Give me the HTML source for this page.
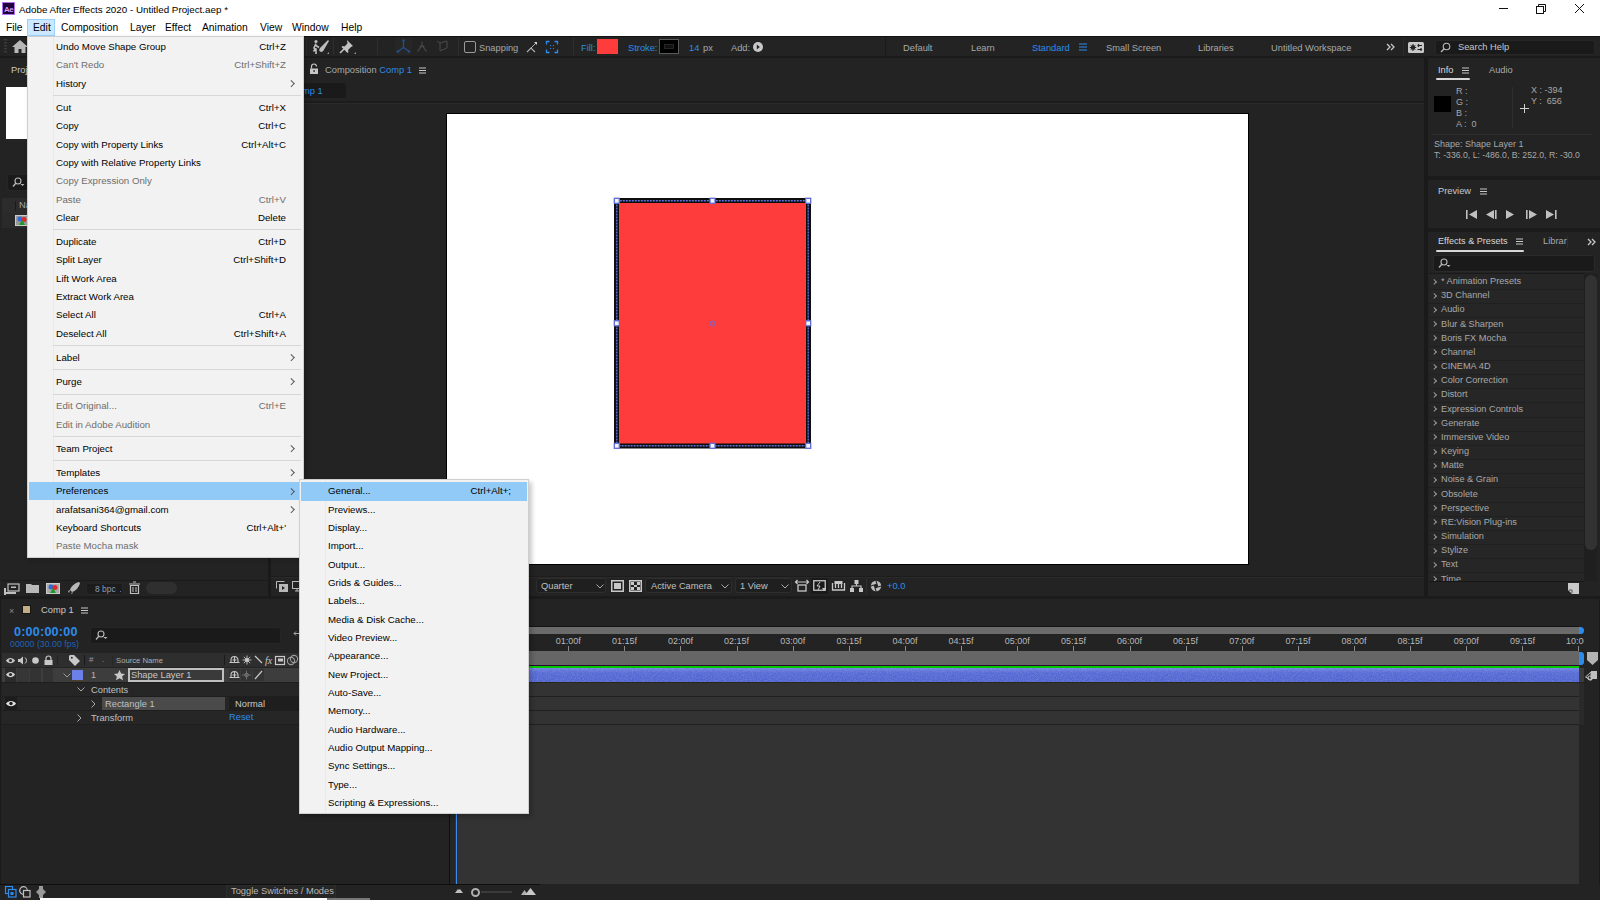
<!DOCTYPE html>
<html><head><meta charset="utf-8">
<style>
*{box-sizing:border-box;margin:0;padding:0}
html,body{width:1600px;height:900px;overflow:hidden;background:#1b1b1b;font-family:"Liberation Sans",sans-serif;position:relative}
.a{position:absolute}
.t{position:absolute;white-space:nowrap;line-height:1}
.g{color:#a8a8a8}
.b{color:#2d8ceb}
.ui{font-size:9.3px}
.panel{position:absolute;background:#232323}
.sep{position:absolute;width:1px;background:#2e2e2e}
svg{position:absolute;overflow:visible}
.mi{position:absolute;left:28px;font-size:9.7px;color:#000;white-space:nowrap;line-height:1}
.mk{position:absolute;right:17px;font-size:9.7px;color:#000;white-space:nowrap;line-height:1}
.dis{color:#6d6d6d}
.ms{position:absolute;left:25px;right:2px;height:1px;background:#d7d7d7}
.arr{position:absolute;right:10px;width:4.5px;height:4.5px;border-right:1.1px solid #555;border-top:1.1px solid #555;transform:rotate(45deg)}
.ef{position:absolute;left:12px;font-size:9.2px;color:#a8a8a8;white-space:nowrap;line-height:1}
.efa{position:absolute;left:3px;width:4.3px;height:4.3px;border-right:1px solid #9a9a9a;border-top:1px solid #9a9a9a;transform:rotate(45deg)}
.efl{position:absolute;left:0px;width:155px;height:1px;background:#202020}
</style></head><body>
<!-- ===== TITLE BAR ===== -->
<div class="a" style="left:0;top:0;width:1600px;height:36px;background:#fff"></div>
<div class="a" style="left:2px;top:2px;width:13px;height:13px;background:#1f0038;border:1px solid #b070f0"></div>
<div class="t" style="left:4px;top:5.5px;font-size:8px;font-weight:bold;color:#cf9cff;letter-spacing:-0.6px">Ae</div>
<div class="t" style="left:19px;top:4.5px;font-size:9.8px;color:#000">Adobe After Effects 2020 - Untitled Project.aep *</div>
<div class="a" style="left:1499px;top:8px;width:9px;height:1px;background:#111"></div>
<svg style="left:1536px;top:4px" width="10" height="10"><rect x="0.5" y="2.5" width="7" height="7" fill="none" stroke="#111"/><path d="M2.5 2.5V0.5h7v7h-2" fill="none" stroke="#111"/></svg>
<svg style="left:1575px;top:4px" width="9" height="9"><path d="M0 0L9 9M9 0L0 9" stroke="#111" stroke-width="1"/></svg>
<!-- menubar -->
<div class="a" style="left:27px;top:19px;width:28px;height:17px;background:#cce8ff;border:1px solid #99d1ff"></div>
<div class="t" style="left:6px;top:23px;font-size:10.3px;color:#000">File</div>
<div class="t" style="left:33px;top:23px;font-size:10.3px;color:#000">Edit</div>
<div class="t" style="left:61px;top:23px;font-size:10.3px;color:#000">Composition</div>
<div class="t" style="left:130px;top:23px;font-size:10.3px;color:#000">Layer</div>
<div class="t" style="left:165px;top:23px;font-size:10.3px;color:#000">Effect</div>
<div class="t" style="left:202px;top:23px;font-size:10.3px;color:#000">Animation</div>
<div class="t" style="left:260px;top:23px;font-size:10.3px;color:#000">View</div>
<div class="t" style="left:292px;top:23px;font-size:10.3px;color:#000">Window</div>
<div class="t" style="left:341px;top:23px;font-size:10.3px;color:#000">Help</div>

<!-- ===== TOOLBAR ===== -->
<div class="a" style="left:0;top:36px;width:1600px;height:21px;background:#232323;border-top:1px solid #121212"></div>
<div class="a" style="left:0;top:56px;width:1600px;height:2px;background:#1a1a1a"></div>
<div class="sep" style="left:306px;top:38px;height:17px;background:#2c2c2c"></div>
<!-- puppet -->
<svg style="left:312px;top:39px" width="18" height="16"><circle cx="4" cy="2.5" r="1.6" fill="#bdbdbd"/><path d="M4 4.5L2 9l2 1v5M4 6.5l3 2M3.5 9.5l-2 3" stroke="#bdbdbd" stroke-width="1.6" fill="none"/><path d="M16 1L8 9c-1 1-1 3 0 3.5 1.5 1 3 0 3.5-1L17 2z" fill="#bdbdbd"/><path d="M15 15h2v-2z" fill="#9a9a9a"/></svg>
<div class="sep" style="left:333px;top:38px;height:17px"></div>
<svg style="left:339px;top:39px" width="18" height="16"><path d="M8 1l6 6-2 1-3 3 .5 2-1 1-6-6 1-1 2 .5 3-3z" fill="#c4c4c4"/><path d="M5 10l-4 4" stroke="#c4c4c4" stroke-width="1.6"/><path d="M15 15h2v-2z" fill="#9a9a9a"/></svg>
<div class="sep" style="left:377px;top:38px;height:17px"></div>
<div class="a" style="left:395px;top:38px;width:17px;height:17px;background:#262626;border-radius:2px"></div>
<svg style="left:396px;top:39px" width="15" height="15"><path d="M7.5 1.5v7M7.5 8.5l-5.5 4M7.5 8.5l5.5 4" stroke="#23508a" stroke-width="1.2" fill="none"/><circle cx="7.5" cy="1.5" r="1.3" fill="#23508a"/><circle cx="2" cy="12.5" r="1.3" fill="#23508a"/><circle cx="13" cy="12.5" r="1.3" fill="#23508a"/></svg>
<svg style="left:415px;top:40px" width="14" height="13"><path d="M7 1.5v4l-4.5 6M7 5.5l4.5 6M4.5 7l2.5-1.5 2.5 1.5" stroke="#4a4a4a" stroke-width="1.1" fill="none"/></svg>
<svg style="left:436px;top:40px" width="12" height="12"><path d="M1 1l3 2v8l7-3V1L4 3" stroke="#4a4a4a" stroke-width="1" fill="none"/></svg>
<div class="sep" style="left:458px;top:38px;height:17px"></div>
<div class="a" style="left:464px;top:41px;width:12px;height:12px;border:1.5px solid #9a9a9a;border-radius:2px"></div>
<div class="t ui g" style="left:479px;top:43.7px">Snapping</div>
<svg style="left:526px;top:41px" width="12" height="12"><path d="M1 11l4-4 4 4" stroke="#b0b0b0" stroke-width="1.1" fill="none"/><path d="M5 7l6-6" stroke="#b0b0b0" stroke-width="1"/><path d="M8 1h3v3z" fill="#d0d0d0"/></svg>
<svg style="left:546px;top:41px" width="12" height="12"><path d="M0.5 3.5v-3h3M8.5 0.5h3v3M11.5 8.5v3h-3M3.5 11.5h-3v-3" stroke="#2d8ceb" stroke-width="1.3" fill="none"/><path d="M4 4l1 1M8 4l-1 1M4 8l1-1M8 8l-1-1" stroke="#2d8ceb" stroke-width="1"/></svg>
<div class="sep" style="left:573px;top:38px;height:17px"></div>
<div class="t ui b" style="left:581px;top:43.7px">Fill:</div>
<div class="a" style="left:597px;top:39px;width:21px;height:15px;background:#ff3c3c"></div>
<div class="t ui b" style="left:628px;top:43.7px">Stroke:</div>
<div class="a" style="left:659px;top:39px;width:20px;height:15px;background:#000;border:1px solid #5a5a5a"></div>
<div class="a" style="left:664px;top:44px;width:10px;height:5px;background:#111;border:1px solid #262626"></div>
<div class="t ui b" style="left:689px;top:43.7px">14</div>
<div class="t ui g" style="left:703px;top:43.7px">px</div>
<div class="t ui g" style="left:731px;top:43.7px">Add:</div>
<svg style="left:753px;top:42px" width="10" height="10"><circle cx="5" cy="5" r="5" fill="#c8c8c8"/><path d="M3.8 2.5l3 2.5-3 2.5z" fill="#232323"/></svg>
<div class="sep" style="left:885px;top:37px;height:19px;background:#1a1a1a"></div>
<div class="t ui g" style="left:903px;top:43.7px">Default</div>
<div class="t ui g" style="left:971px;top:43.7px">Learn</div>
<div class="t ui b" style="left:1032px;top:43.7px">Standard</div>
<svg style="left:1079px;top:43px" width="8" height="8"><path d="M0 1h8M0 4h8M0 7h8" stroke="#2d8ceb" stroke-width="1.2"/></svg>
<div class="t ui g" style="left:1106px;top:43.7px">Small Screen</div>
<div class="t ui g" style="left:1198px;top:43.7px">Libraries</div>
<div class="t ui g" style="left:1271px;top:43.7px">Untitled Workspace</div>
<svg style="left:1386px;top:43px" width="10" height="8"><path d="M1 1l3 3-3 3M5 1l3 3-3 3" stroke="#c8c8c8" stroke-width="1.3" fill="none"/></svg>
<div class="sep" style="left:1403px;top:37px;height:19px;background:#2c2c2c"></div>
<div class="a" style="left:1408px;top:42px;width:16px;height:11px;background:#c8c8c8;border-radius:1.5px"></div>
<svg style="left:1409px;top:43px" width="14" height="9"><circle cx="4" cy="4.5" r="2.2" fill="#232323"/><path d="M4 1v7M0.8 4.5h6.4M1.8 2.3l4.4 4.4M6.2 2.3L1.8 6.7" stroke="#232323" stroke-width="1"/><path d="M8.5 2.5h4.5M8.5 6.5h4.5" stroke="#232323" stroke-width="1"/><path d="M9.5 1v3M12 5v3" stroke="#232323" stroke-width="1.2"/></svg>
<div class="a" style="left:1435px;top:40px;width:160px;height:15px;background:#1a1a1a;border-radius:3px;border:1px solid #262626"></div>
<svg style="left:1440px;top:42px" width="11" height="11"><circle cx="6.5" cy="4.5" r="3.3" stroke="#b8b8b8" stroke-width="1.1" fill="none"/><path d="M4.2 6.8L1 10" stroke="#b8b8b8" stroke-width="1.4"/></svg>
<div class="t" style="left:1458px;top:43px;font-size:9.3px;color:#c8c8c8">Search Help</div>
<!-- ===== PROJECT PANEL ===== -->
<div class="panel" style="left:0;top:58px;width:268px;height:538px"></div>
<svg style="left:4px;top:39px" width="3" height="16"><g fill="#3a3a3a"><rect y="0" width="3" height="1.5"/><rect y="3" width="3" height="1.5"/><rect y="6" width="3" height="1.5"/><rect y="9" width="3" height="1.5"/><rect y="12" width="3" height="1.5"/></g></svg>
<svg style="left:12px;top:40px" width="16" height="13"><path d="M8 0L0 7h2.5v6h4V9h3v4h4V7H16z" fill="#b8b8b8"/></svg>
<div class="t" style="left:11px;top:66px;font-size:9.3px;color:#c8c8c8">Project</div>
<div class="a" style="left:6px;top:87px;width:60px;height:52px;background:#fff"></div>
<div class="a" style="left:7px;top:174px;width:200px;height:17px;background:#1a1a1a;border-radius:3px;border:1px solid #262626"></div>
<svg style="left:12px;top:177px" width="14" height="11"><circle cx="6" cy="4" r="3" stroke="#b8b8b8" stroke-width="1.1" fill="none"/><path d="M4 6L1 9.5" stroke="#b8b8b8" stroke-width="1.3"/><path d="M8.5 7h4l-2 2z" fill="#b8b8b8"/></svg>
<div class="a" style="left:2px;top:198px;width:266px;height:15px;background:#2c2c2c"></div>
<div class="a" style="left:15px;top:201px;width:1px;height:10px;background:#1a1a1a"></div>
<div class="t ui g" style="left:19px;top:201px">Name</div>
<div class="a" style="left:2px;top:213px;width:266px;height:15px;background:#2a2a2a"></div>
<div class="a" style="left:15px;top:215px;width:14px;height:11px;background:#999;border:1px solid #ccc"></div>
<svg style="left:17px;top:216px" width="10" height="9"><circle cx="3" cy="3" r="2.5" fill="#2a6be0"/><circle cx="7" cy="3.5" r="2.5" fill="#e02a2a"/><path d="M2 9l3-5 3 5z" fill="#1a9a2a"/></svg>
<!-- project bottom toolbar -->
<div class="a" style="left:2px;top:580px;width:266px;height:1px;background:#1a1a1a"></div>
<svg style="left:4px;top:583px" width="16" height="12"><rect x="4" y="1" width="11" height="7" fill="none" stroke="#c0c0c0" stroke-width="1.2"/><rect x="7" y="3.5" width="5" height="1.5" fill="#c0c0c0"/><rect x="0" y="5" width="2" height="7" fill="#c0c0c0"/><rect x="2" y="9" width="10" height="2" fill="#c0c0c0"/></svg>
<svg style="left:26px;top:583px" width="13" height="10"><path d="M0 1h5l1 1h7v8H0z" fill="#b8b8b8"/></svg>
<div class="a" style="left:46px;top:583px;width:14px;height:11px;background:#aaa;border:1px solid #ccc"></div>
<svg style="left:48px;top:584px" width="10" height="9"><circle cx="3" cy="3" r="2.5" fill="#2a6be0"/><circle cx="7" cy="3.5" r="2.5" fill="#e02a2a"/><path d="M2 9l3-5 3 5z" fill="#1a9a2a"/></svg>
<svg style="left:68px;top:582px" width="12" height="12"><path d="M11 0C7 1 3 4 2 8l2 2c4-1 7-5 8-9z" fill="#b8b8b8"/><path d="M2 8L0 9l1 2zM3 11l1 1 1-2z" fill="#b8b8b8"/></svg>
<div class="a" style="left:86px;top:583px;width:37px;height:12px;background:#1c1c1c;border-radius:2px;border:1px solid #262626"></div>
<div class="t" style="left:95px;top:585px;font-size:8.5px;color:#8b9bb5">8 bpc</div>
<div class="a" style="left:120px;top:591px;width:1px;height:1px;background:#4a7ac0"></div>
<svg style="left:129px;top:582px" width="11" height="12"><path d="M0 2h11M4 0h3" stroke="#c0c0c0" stroke-width="1.2"/><path d="M1.5 3.5h8v8h-8z" fill="none" stroke="#c0c0c0" stroke-width="1.2"/><path d="M4 5v5M7 5v5" stroke="#c0c0c0" stroke-width="1"/></svg>
<div class="a" style="left:146px;top:582px;width:31px;height:12px;background:#2f2f2f;border-radius:6px"></div>
<div class="a" style="left:268px;top:58px;width:3px;height:538px;background:#1a1a1a"></div>

<!-- ===== COMPOSITION PANEL ===== -->
<div class="panel" style="left:271px;top:58px;width:1153px;height:538px"></div>
<svg style="left:310px;top:64px" width="8" height="10"><path d="M1.5 4.5V2.5a2.5 2.5 0 0 1 5 0" fill="none" stroke="#c8c8c8" stroke-width="1.2"/><rect x="0" y="4.5" width="8" height="5.5" fill="#c8c8c8"/><rect x="3.5" y="6" width="1.2" height="2" fill="#232323"/></svg>
<div class="t ui g" style="left:325px;top:66px">Composition <span class="b">Comp 1</span></div>
<svg style="left:419px;top:67px" width="8" height="7"><path d="M0 1h7M0 3.5h7M0 6h7" stroke="#c8c8c8" stroke-width="1.1"/></svg>
<div class="a" style="left:280px;top:83px;width:66px;height:15px;background:#1a1a1a;border-radius:2px"></div>
<div class="t ui b" style="left:290px;top:87px">Comp 1</div>
<div class="a" style="left:271px;top:101px;width:1153px;height:2px;background:#1c1c1c"></div>
<div class="a" style="left:271px;top:103px;width:1153px;height:1px;background:#2a2a2a"></div>
<!-- canvas -->
<div class="a" style="left:446px;top:113px;width:803px;height:452px;background:#fff;border:1px solid #000"></div>
<svg style="left:0;top:0" width="1600" height="900">
<rect x="614" y="198" width="197" height="250.5" fill="#0d0d0d"/>
<rect x="619" y="203" width="187" height="240.5" fill="#ff3c3c"/>
<rect x="616.8" y="200.8" width="191.4" height="245" fill="none" stroke="#6272dc" stroke-width="1.4" stroke-dasharray="2 1"/>
<rect x="614.3" y="198.3" width="5" height="5" fill="#f4f4f4" stroke="#5f6ed8" stroke-width="1.3"/><rect x="710.0" y="198.3" width="5" height="5" fill="#f4f4f4" stroke="#5f6ed8" stroke-width="1.3"/><rect x="805.7" y="198.3" width="5" height="5" fill="#f4f4f4" stroke="#5f6ed8" stroke-width="1.3"/><rect x="614.3" y="320.8" width="5" height="5" fill="#f4f4f4" stroke="#5f6ed8" stroke-width="1.3"/><rect x="805.7" y="320.8" width="5" height="5" fill="#f4f4f4" stroke="#5f6ed8" stroke-width="1.3"/><rect x="614.3" y="443.3" width="5" height="5" fill="#f4f4f4" stroke="#5f6ed8" stroke-width="1.3"/><rect x="710.0" y="443.3" width="5" height="5" fill="#f4f4f4" stroke="#5f6ed8" stroke-width="1.3"/><rect x="805.7" y="443.3" width="5" height="5" fill="#f4f4f4" stroke="#5f6ed8" stroke-width="1.3"/>
<circle cx="712.5" cy="323.5" r="2.5" fill="none" stroke="#6a6ad8" stroke-width="1"/>
</svg>
<!-- comp bottom bar -->
<div class="a" style="left:271px;top:576px;width:1153px;height:1px;background:#1c1c1c"></div><div class="a" style="left:271px;top:577px;width:1153px;height:1px;background:#2a2a2a"></div>
<svg style="left:276px;top:581px" width="12" height="11"><rect x="3" y="3" width="9" height="8" fill="#b8b8b8"/><path d="M0.5 7.5v-7h8" fill="none" stroke="#b8b8b8"/><path d="M6 5l3 2-3 2z" fill="#232323"/></svg>
<svg style="left:292px;top:581px" width="10" height="11"><rect x="0.5" y="0.5" width="9" height="7" fill="none" stroke="#b8b8b8"/><path d="M3 10h4M5 8v2" stroke="#b8b8b8"/></svg>
<div class="a" style="left:536px;top:578px;width:70px;height:15px;background:#1f1f1f;border-radius:2.5px;border:1px solid #2e2e2e"></div>
<div class="t ui g" style="left:541px;top:582px;color:#c0c0c0">Quarter</div>
<svg style="left:596px;top:584px" width="8" height="5"><path d="M0.5 0.5l3.5 3.5 3.5-3.5" stroke="#aaa" fill="none"/></svg>
<svg style="left:611px;top:580px" width="13" height="12"><rect x="0.75" y="0.75" width="11.5" height="10.5" fill="none" stroke="#c8c8c8" stroke-width="1.5"/><rect x="3" y="3" width="7" height="6" fill="#c8c8c8"/></svg>
<svg style="left:629px;top:580px" width="13" height="12"><rect x="0.75" y="0.75" width="11.5" height="10.5" fill="none" stroke="#c8c8c8" stroke-width="1.5"/><g fill="#c8c8c8"><rect x="2" y="2" width="3" height="3"/><rect x="8" y="2" width="3" height="3"/><rect x="5" y="5" width="3" height="2"/><rect x="2" y="7" width="3" height="3"/><rect x="8" y="7" width="3" height="3"/></g></svg>
<div class="a" style="left:645px;top:578px;width:87px;height:15px;background:#1f1f1f;border-radius:2.5px;border:1px solid #2e2e2e"></div>
<div class="t ui" style="left:651px;top:582px;color:#c0c0c0">Active Camera</div>
<svg style="left:721px;top:584px" width="8" height="5"><path d="M0.5 0.5l3.5 3.5 3.5-3.5" stroke="#aaa" fill="none"/></svg>
<div class="a" style="left:735px;top:578px;width:57px;height:15px;background:#1f1f1f;border-radius:2.5px;border:1px solid #2e2e2e"></div>
<div class="t ui" style="left:740px;top:582px;color:#c0c0c0">1 View</div>
<svg style="left:781px;top:584px" width="8" height="5"><path d="M0.5 0.5l3.5 3.5 3.5-3.5" stroke="#aaa" fill="none"/></svg>
<svg style="left:795px;top:580px" width="14" height="12"><path d="M0 2h14M2.5 0l-2 2 2 2M11.5 0l2 2-2 2" stroke="#c8c8c8" stroke-width="1.2" fill="none"/><rect x="3" y="5" width="8" height="6" fill="none" stroke="#c8c8c8" stroke-width="1.3"/></svg>
<div class="a" style="left:811px;top:578px;width:17px;height:16px;background:#1a1a1a"></div>
<svg style="left:813px;top:580px" width="13" height="12"><rect x="0.75" y="0.75" width="11.5" height="9.5" fill="none" stroke="#c8c8c8" stroke-width="1.3"/><path d="M7 2l-3 4h3l-2 4" stroke="#c8c8c8" fill="none"/><path d="M9 8h4l-2 3z" fill="#c8c8c8"/></svg>
<svg style="left:832px;top:580px" width="13" height="11"><path d="M0.5 3v7h12V3M3.5 3v5M6.5 1v7M9.5 3v5" stroke="#c8c8c8" stroke-width="1.3" fill="none"/><rect x="2.5" y="1" width="8" height="3" fill="#c8c8c8"/></svg>
<svg style="left:850px;top:580px" width="13" height="12"><rect x="4.5" y="0" width="4" height="4" fill="#c8c8c8"/><rect x="0" y="8" width="4" height="4" fill="#c8c8c8"/><rect x="9" y="8" width="4" height="4" fill="#c8c8c8"/><path d="M6.5 4v2M2 8V6h9v2" stroke="#c8c8c8" fill="none" stroke-width="1.2"/></svg>
<div class="a" style="left:866px;top:579px;width:1px;height:15px;background:#2e2e2e"></div>
<svg style="left:870px;top:580px" width="12" height="12"><circle cx="6" cy="6" r="5.2" fill="#bdbdbd"/><circle cx="6" cy="6" r="2.2" fill="#232323"/><path d="M6 0.8L7 4M11.2 6L8 7M6 11.2L5 8M0.8 6L4 5" stroke="#232323" stroke-width="1.1"/></svg>
<div class="t ui b" style="left:887px;top:582px">+0.0</div>
<div class="a" style="left:1424px;top:58px;width:4px;height:538px;background:#1a1a1a"></div>
<!-- ===== RIGHT COLUMN ===== -->
<!-- info -->
<div class="panel" style="left:1428px;top:58px;width:172px;height:118px"></div>
<div class="t" style="left:1438px;top:66px;font-size:9.3px;color:#d8d8d8">Info</div>
<svg style="left:1462px;top:67px" width="8" height="7"><path d="M0 1h7M0 3.5h7M0 6h7" stroke="#c8c8c8" stroke-width="1"/></svg>
<div class="a" style="left:1436px;top:78px;width:34px;height:2px;background:#d8d8d8;border-radius:1px"></div>
<div class="t ui g" style="left:1489px;top:66px">Audio</div>
<div class="a" style="left:1434px;top:96px;width:17px;height:16px;background:#000"></div>
<div class="t g" style="left:1456px;top:87px;font-size:9px">R :</div>
<div class="t g" style="left:1456px;top:98px;font-size:9px">G :</div>
<div class="t g" style="left:1456px;top:109px;font-size:9px">B :</div>
<div class="t g" style="left:1456px;top:120px;font-size:9px">A :&nbsp; 0</div>
<div class="a" style="left:1512px;top:87px;width:1px;height:41px;background:#2e2e2e"></div>
<svg style="left:1520px;top:104px" width="9" height="9"><path d="M4.5 0v9M0 4.5h9" stroke="#d0d0d0" stroke-width="1"/></svg>
<div class="t g" style="left:1531px;top:86px;font-size:9px">X : -394</div>
<div class="t g" style="left:1531px;top:97px;font-size:9px">Y :&nbsp; 656</div>
<div class="a" style="left:1432px;top:134px;width:160px;height:1px;background:#2e2e2e"></div>
<div class="t g" style="left:1434px;top:140px;font-size:9px">Shape: Shape Layer 1</div>
<div class="t g" style="left:1434px;top:151px;font-size:8.7px">T: -336.0, L: -486.0, B: 252.0, R: -30.0</div>
<!-- preview -->
<div class="panel" style="left:1428px;top:180px;width:172px;height:48px"></div>
<div class="t" style="left:1438px;top:187px;font-size:9.3px;color:#c8c8c8">Preview</div>
<svg style="left:1480px;top:188px" width="8" height="7"><path d="M0 1h7M0 3.5h7M0 6h7" stroke="#c8c8c8" stroke-width="1"/></svg>
<svg style="left:1466px;top:210px" width="100" height="10">
<g fill="#c0c0c0"><rect x="0" y="0" width="1.6" height="9"/><path d="M11 0v9L3 4.5z"/>
<path d="M28 0v9L20 4.5z"/><rect x="29" y="0" width="1.6" height="9"/>
<path d="M40 0v9l8-4.5z"/>
<rect x="60" y="0" width="1.6" height="9"/><path d="M63 0v9l8-4.5z"/>
<path d="M80 0v9l8-4.5z"/><rect x="89" y="0" width="1.6" height="9"/></g></svg>
<!-- effects & presets -->
<div class="panel" style="left:1428px;top:232px;width:172px;height:364px"></div>
<div class="t" style="left:1438px;top:237px;font-size:9.1px;color:#d8d8d8">Effects &amp; Presets</div>
<svg style="left:1516px;top:238px" width="8" height="7"><path d="M0 1h7M0 3.5h7M0 6h7" stroke="#c8c8c8" stroke-width="1"/></svg>
<div class="a" style="left:1436px;top:250px;width:88px;height:2px;background:#d8d8d8;border-radius:1px"></div>
<div class="a" style="left:1543px;top:236px;width:24px;height:12px;overflow:hidden"><div class="t ui g" style="left:0;top:1px">Libraries</div></div>
<div class="a" style="left:1567px;top:236px;width:1px;height:12px;background:#2e2e2e"></div>
<svg style="left:1587px;top:238px" width="10" height="8"><path d="M1 1l3 3-3 3M5 1l3 3-3 3" stroke="#c8c8c8" stroke-width="1.3" fill="none"/></svg>
<div class="a" style="left:1433px;top:255px;width:162px;height:17px;background:#1a1a1a;border:1px solid #2a2a2a;border-radius:3px"></div>
<svg style="left:1438px;top:258px" width="14" height="11"><circle cx="6" cy="4" r="3" stroke="#b8b8b8" stroke-width="1.1" fill="none"/><path d="M4 6L1 9.5" stroke="#b8b8b8" stroke-width="1.3"/><path d="M8.5 7h4l-2 2z" fill="#b8b8b8"/></svg>
<div class="a" style="left:1429px;top:273px;width:155px;height:308px;background:#262626;border-top:1px solid #1a1a1a;overflow:hidden">
<div class="efa" style="top:5.50px"></div><div class="ef" style="top:3.00px">* Animation Presets</div>
<div class="efl" style="top:15.00px"></div>
<div class="efa" style="top:19.67px"></div><div class="ef" style="top:17.17px">3D Channel</div>
<div class="efl" style="top:29.17px"></div>
<div class="efa" style="top:33.84px"></div><div class="ef" style="top:31.34px">Audio</div>
<div class="efl" style="top:43.34px"></div>
<div class="efa" style="top:48.01px"></div><div class="ef" style="top:45.51px">Blur &amp; Sharpen</div>
<div class="efl" style="top:57.51px"></div>
<div class="efa" style="top:62.18px"></div><div class="ef" style="top:59.68px">Boris FX Mocha</div>
<div class="efl" style="top:71.68px"></div>
<div class="efa" style="top:76.35px"></div><div class="ef" style="top:73.85px">Channel</div>
<div class="efl" style="top:85.85px"></div>
<div class="efa" style="top:90.52px"></div><div class="ef" style="top:88.02px">CINEMA 4D</div>
<div class="efl" style="top:100.02px"></div>
<div class="efa" style="top:104.69px"></div><div class="ef" style="top:102.19px">Color Correction</div>
<div class="efl" style="top:114.19px"></div>
<div class="efa" style="top:118.86px"></div><div class="ef" style="top:116.36px">Distort</div>
<div class="efl" style="top:128.36px"></div>
<div class="efa" style="top:133.03px"></div><div class="ef" style="top:130.53px">Expression Controls</div>
<div class="efl" style="top:142.53px"></div>
<div class="efa" style="top:147.20px"></div><div class="ef" style="top:144.70px">Generate</div>
<div class="efl" style="top:156.70px"></div>
<div class="efa" style="top:161.37px"></div><div class="ef" style="top:158.87px">Immersive Video</div>
<div class="efl" style="top:170.87px"></div>
<div class="efa" style="top:175.54px"></div><div class="ef" style="top:173.04px">Keying</div>
<div class="efl" style="top:185.04px"></div>
<div class="efa" style="top:189.71px"></div><div class="ef" style="top:187.21px">Matte</div>
<div class="efl" style="top:199.21px"></div>
<div class="efa" style="top:203.88px"></div><div class="ef" style="top:201.38px">Noise &amp; Grain</div>
<div class="efl" style="top:213.38px"></div>
<div class="efa" style="top:218.05px"></div><div class="ef" style="top:215.55px">Obsolete</div>
<div class="efl" style="top:227.55px"></div>
<div class="efa" style="top:232.22px"></div><div class="ef" style="top:229.72px">Perspective</div>
<div class="efl" style="top:241.72px"></div>
<div class="efa" style="top:246.39px"></div><div class="ef" style="top:243.89px">RE:Vision Plug-ins</div>
<div class="efl" style="top:255.89px"></div>
<div class="efa" style="top:260.56px"></div><div class="ef" style="top:258.06px">Simulation</div>
<div class="efl" style="top:270.06px"></div>
<div class="efa" style="top:274.73px"></div><div class="ef" style="top:272.23px">Stylize</div>
<div class="efl" style="top:284.23px"></div>
<div class="efa" style="top:288.90px"></div><div class="ef" style="top:286.40px">Text</div>
<div class="efl" style="top:298.40px"></div>
<div class="efa" style="top:303.07px"></div><div class="ef" style="top:300.57px">Time</div>
<div class="efl" style="top:312.57px"></div>
</div>
<div class="a" style="left:1584px;top:274px;width:13px;height:307px;background:#1f1f1f"></div>
<div class="a" style="left:1585px;top:275px;width:12px;height:275px;background:#323232;border-radius:6px"></div>
<div class="a" style="left:1429px;top:581px;width:155px;height:1px;background:#161616"></div>
<svg style="left:1568px;top:583px" width="11" height="11"><path d="M0 0h11v11H4L0 7z" fill="#c8c8c8"/><path d="M1 7h3v3" stroke="#555" stroke-width="1" fill="none"/></svg>
<!-- ===== TIMELINE ===== -->
<div class="panel" style="left:1px;top:599px;width:1598px;height:286px"></div>
<div class="t" style="left:9px;top:607px;font-size:9px;color:#8a8a8a">×</div>
<div class="a" style="left:22px;top:605px;width:9px;height:9px;background:#c4ac84;border:1px solid #161616"></div>
<div class="t" style="left:41px;top:606px;font-size:9.3px;color:#c8c8c8">Comp 1</div>
<svg style="left:81px;top:607px" width="8" height="7"><path d="M0 1h7M0 3.5h7M0 6h7" stroke="#c8c8c8" stroke-width="1.1"/></svg>
<div class="t" style="left:14px;top:626px;font-size:12.6px;font-weight:bold;color:#2d8ceb;letter-spacing:0.2px">0:00:00:00</div>
<div class="t" style="left:10px;top:640px;font-size:8.8px;color:#1f62b8">00000 (30.00 fps)</div>
<div class="a" style="left:90px;top:627px;width:191px;height:17px;background:#1a1a1a;border-radius:3px;border:1px solid #262626"></div>
<svg style="left:95px;top:630px" width="14" height="11"><circle cx="6" cy="4" r="3" stroke="#b8b8b8" stroke-width="1.1" fill="none"/><path d="M4 6L1 9.5" stroke="#b8b8b8" stroke-width="1.3"/><path d="M8.5 7h4l-2 2z" fill="#b8b8b8"/></svg>
<svg style="left:294px;top:631px" width="8" height="5"><path d="M0 2.5h8M2 0.5l-2 2 2 2" stroke="#aaa" fill="none"/></svg>
<!-- header row -->
<div class="a" style="left:2px;top:653px;width:447px;height:14px;background:#2e2e2e"></div>
<svg style="left:6px;top:656px" width="60" height="9">
<path d="M0 4.5C2 1 7 1 9 4.5 7 8 2 8 0 4.5z" fill="#c8c8c8"/><circle cx="4.5" cy="4.5" r="1.6" fill="#2e2e2e"/>
<path d="M12 3h2l3-2.5v8L14 6h-2z" fill="#c8c8c8"/><path d="M19 1.5c2 1.5 2 4.5 0 6" stroke="#c8c8c8" fill="none"/>
<circle cx="29.5" cy="4.5" r="3.3" fill="#c8c8c8"/>
<path d="M40 4V2.5a2.5 2.5 0 0 1 5 0V4" stroke="#c8c8c8" stroke-width="1.2" fill="none"/><rect x="38.5" y="4" width="8" height="5" fill="#c8c8c8"/>
</svg>
<div class="a" style="left:57px;top:655px;width:1px;height:10px;background:#222"></div>
<svg style="left:69px;top:655px" width="12" height="11"><path d="M0 1v4l6 6 5-5-6-6H1z" fill="#c8c8c8"/><circle cx="2.8" cy="2.8" r="1" fill="#2e2e2e"/></svg>
<div class="a" style="left:84px;top:655px;width:1px;height:10px;background:#1a1a1a"></div>
<div class="t" style="left:89px;top:656px;font-size:8px;color:#9a9ab8">#</div>
<div class="t" style="left:102px;top:656px;font-size:8px;color:#9a9a9a">.</div>
<div class="a" style="left:112px;top:655px;width:1px;height:10px;background:#262626"></div>
<div class="t" style="left:116px;top:656.5px;font-size:7.7px;color:#b0b0b0">Source Name</div>
<div class="a" style="left:224px;top:655px;width:1px;height:10px;background:#1a1a1a"></div>
<svg style="left:229px;top:655px" width="72" height="10">
<path d="M0.5 7.5h10M2 7.5V5a3.5 3.5 0 0 1 7 0v2.5M5.5 1.5v6M3.5 5h4" stroke="#c8c8c8" stroke-width="1.1" fill="none"/>
<circle cx="18" cy="5" r="2" fill="#c8c8c8"/><path d="M18 0.5v9M13.5 5h9M14.8 1.8l6.4 6.4M21.2 1.8l-6.4 6.4" stroke="#c8c8c8" stroke-width=".9"/>
<path d="M26 1l7 7" stroke="#c8c8c8" stroke-width="1.3"/>
<text x="36" y="9" font-size="10" font-style="italic" fill="#c8c8c8" font-family="Liberation Serif">fx</text>
<rect x="46.5" y="1.5" width="9" height="8" fill="none" stroke="#c8c8c8" stroke-width="1.2"/><rect x="49" y="3.5" width="5" height="3" fill="#c8c8c8"/>
<circle cx="62" cy="6" r="3.6" fill="none" stroke="#9a9a9a" stroke-width="1.1"/><circle cx="65" cy="4" r="3.6" fill="none" stroke="#9a9a9a" stroke-width="1.1"/>
</svg>
<!-- layer row -->
<div class="a" style="left:2px;top:668px;width:447px;height:14px;background:#3d3d3d"></div>
<div class="a" style="left:5px;top:668px;width:11px;height:14px;background:#2b2b2b"></div>
<svg style="left:6px;top:671px" width="9" height="7"><path d="M0 3.5C2 0 7 0 9 3.5 7 7 2 7 0 3.5z" fill="#d0d0d0"/><circle cx="4.5" cy="3.5" r="1.6" fill="#2b2b2b"/></svg>
<div class="a" style="left:17px;top:668px;width:12px;height:14px;background:#363636"></div>
<div class="a" style="left:30px;top:668px;width:11px;height:14px;background:#333"></div>
<div class="a" style="left:43px;top:668px;width:10px;height:14px;background:#333"></div>
<svg style="left:63px;top:673px" width="8" height="5"><path d="M0.5 0.5l3.5 3.5 3.5-3.5" stroke="#999" fill="none"/></svg>
<div class="a" style="left:72px;top:670px;width:11px;height:11px;background:#6b80e8;border-bottom:1px solid #4a4020"></div>
<div class="t" style="left:91px;top:671px;font-size:9px;color:#b8b8b8">1</div>
<svg style="left:114px;top:670px" width="11" height="10"><path d="M5.5 0l1.6 3.5 3.9.4-2.9 2.6.9 3.8-3.5-2-3.5 2 .9-3.8L0 3.9l3.9-.4z" fill="#c8c8c8"/></svg>
<div class="a" style="left:128px;top:668px;width:96px;height:14px;border:2px solid #c0c0c0;background:#3a3a3a"></div>
<div class="t" style="left:131px;top:671px;font-size:9.3px;color:#c8c8c8">Shape Layer 1</div>
<svg style="left:229px;top:669px" width="40" height="12">
<rect x="0" y="0" width="11" height="12" fill="#333"/><rect x="12" y="0" width="11" height="12" fill="#333"/><rect x="24" y="0" width="11" height="12" fill="#333"/>
<path d="M0.5 8.5h10M2 8.5V6a3.5 3.5 0 0 1 7 0v2.5M5.5 2.5v6M3.5 6h4" stroke="#c8c8c8" stroke-width="1.1" fill="none"/>
<circle cx="17.5" cy="6" r="1.8" fill="none" stroke="#777"/><path d="M17.5 1.5v9M13 6h9" stroke="#777" stroke-width=".8"/>
<path d="M26 10l7-8" stroke="#c8c8c8" stroke-width="1.2"/>
</svg>
<div class="a" style="left:2px;top:682px;width:447px;height:1px;background:#1e1e1e"></div>
<!-- contents rows -->
<div class="a" style="left:2px;top:683px;width:447px;height:13px;background:#262626"></div>
<svg style="left:77px;top:687px" width="8" height="5"><path d="M0.5 0.5l3.5 3.5 3.5-3.5" stroke="#aaa" fill="none"/></svg>
<div class="t ui" style="left:91px;top:686px;color:#c0c0c0">Contents</div>
<div class="a" style="left:2px;top:696px;width:447px;height:1px;background:#1e1e1e"></div>
<div class="a" style="left:2px;top:697px;width:447px;height:13px;background:#262626"></div>
<div class="a" style="left:5px;top:697px;width:12px;height:13px;background:#1c1c1c"></div>
<svg style="left:6px;top:700px" width="10" height="7"><path d="M0 3.5C2 0 8 0 10 3.5 8 7 2 7 0 3.5z" fill="#e0e0e0"/><circle cx="5" cy="3.5" r="1.7" fill="#1c1c1c"/></svg>
<svg style="left:91px;top:700px" width="5" height="8"><path d="M0.5 0.5l3.5 3.5-3.5 3.5" stroke="#aaa" fill="none"/></svg>
<div class="a" style="left:102px;top:697px;width:123px;height:13px;background:#4a4a4a"></div>
<div class="t ui" style="left:105px;top:700px;color:#c0c0c0">Rectangle 1</div>
<div class="a" style="left:229px;top:697px;width:220px;height:13px;background:#1e1e1e"></div>
<div class="t ui" style="left:235px;top:700px;color:#c8c8c8">Normal</div>
<div class="a" style="left:2px;top:710px;width:447px;height:1px;background:#1e1e1e"></div>
<div class="a" style="left:2px;top:711px;width:447px;height:13px;background:#262626"></div>
<svg style="left:77px;top:714px" width="5" height="8"><path d="M0.5 0.5l3.5 3.5-3.5 3.5" stroke="#aaa" fill="none"/></svg>
<div class="t ui" style="left:91px;top:714px;color:#c0c0c0">Transform</div>
<div class="t ui b" style="left:229px;top:713px">Reset</div>
<div class="a" style="left:2px;top:724px;width:447px;height:1px;background:#1e1e1e"></div>
<!-- divider -->
<div class="a" style="left:449px;top:599px;width:1px;height:285px;background:#0e0e0e"></div>
<div class="a" style="left:450px;top:652px;width:5px;height:232px;background:#262626"></div>
<!-- ruler & bars -->
<div class="a" style="left:455px;top:626px;width:1124px;height:1px;background:#141414"></div>
<div class="a" style="left:455px;top:627px;width:1124px;height:7px;background:#6b6b6b"></div>
<div class="a" style="left:1579px;top:627px;width:5px;height:7px;background:#2d8ceb;border-radius:0 4px 4px 0"></div>
<div class="a" style="left:455px;top:651px;width:1124px;height:14px;background:#666"></div>
<div class="a" style="left:1579px;top:652px;width:5px;height:13px;background:#2d8ceb;border-radius:0 3px 3px 0"></div>
<div class="a" style="left:455px;top:665px;width:1124px;height:1px;background:#2a0a2a"></div>
<div class="a" style="left:455px;top:666px;width:1124px;height:2px;background:#00c800"></div>
<div class="a" style="left:455px;top:668px;width:1124px;height:14px;background:linear-gradient(#6f82de,#5368d4 35%,#4f64d0)"></div>
<svg style="left:455px;top:668px" width="1124" height="14"><filter id="nz" x="0" y="0" width="100%" height="100%"><feTurbulence type="fractalNoise" baseFrequency="1.2" numOctaves="1" seed="3"/><feColorMatrix type="matrix" values="0 0 0 0 1  0 0 0 0 1  0 0 0 0 1  0 0 0 -1.6 1.05"/></filter><rect width="1124" height="14" filter="url(#nz)" opacity="0.22"/></svg>
<div class="a" style="left:455px;top:682px;width:1124px;height:1px;background:#2a2818"></div>
<div class="a" style="left:1579px;top:668px;width:5px;height:14px;background:#3c3c3c"></div>
<div class="a" style="left:455px;top:683px;width:1124px;height:201px;background:#333"></div>
<div class="a" style="left:455px;top:696px;width:1129px;height:1px;background:#202020"></div>
<div class="a" style="left:455px;top:710px;width:1129px;height:1px;background:#202020"></div>
<div class="a" style="left:455px;top:724px;width:1129px;height:1px;background:#202020"></div>
<div class="a" style="left:1579px;top:683px;width:5px;height:42px;background:#2a2a2a"></div>
<svg style="left:1587px;top:652px" width="11" height="13"><path d="M0 0h11v8l-5.5 5L0 8z" fill="#b4b4b4"/></svg>
<svg style="left:1585px;top:670px" width="13" height="12"><path d="M6 1h6v8H6z" fill="#c0c0c0"/><path d="M0.5 7L6 2v8z" fill="none" stroke="#c0c0c0"/><circle cx="5" cy="8" r="2" fill="none" stroke="#c0c0c0" stroke-width="1.2"/></svg>
<div class="a" style="left:456px;top:627px;width:1px;height:257px;background:#3a8df0"></div>
<div class="a" style="left:457px;top:627px;width:1px;height:257px;background:#3a2a10;opacity:.6"></div>
<!-- bottom strip -->
<div class="a" style="left:0;top:884px;width:540px;height:1px;background:#0e0e0e"></div>
<div class="a" style="left:0;top:885px;width:1600px;height:15px;background:#232323"></div>
<svg style="left:5px;top:886px" width="12" height="12"><rect x="0.5" y="0.5" width="7" height="7" fill="none" stroke="#2d8ceb" stroke-width="1.2"/><rect x="3.5" y="3.5" width="7.5" height="7.5" fill="#232323" stroke="#2d8ceb" stroke-width="1.2"/><rect x="5.5" y="6" width="3" height="3" fill="#2d8ceb"/></svg>
<svg style="left:19px;top:886px" width="12" height="12"><circle cx="4.5" cy="4.5" r="3.8" fill="none" stroke="#c0c0c0" stroke-width="1.2"/><rect x="4.5" y="4.5" width="6.5" height="6.5" fill="#232323" stroke="#c0c0c0" stroke-width="1.2"/></svg>
<svg style="left:36px;top:886px" width="10" height="12"><path d="M3 0h4v3l3 3-3 3v3H3V9L0 6l3-3z" fill="#9a9a9a"/></svg>
<div class="a" style="left:226px;top:885px;width:110px;height:14px;background:#262626;border:1px solid #2c2c2c"></div>
<div class="t ui" style="left:231px;top:887px;color:#b8b8b8">Toggle Switches / Modes</div>
<svg style="left:455px;top:888px" width="8" height="6"><path d="M0 5l3-4 1 1 1-1 3 4z" fill="#c0c0c0"/></svg>
<div class="a" style="left:481px;top:891px;width:31px;height:2px;background:#3a3a3a"></div>
<div class="a" style="left:471px;top:888px;width:9px;height:9px;border:2px solid #b0b0b0;border-radius:50%"></div>
<svg style="left:521px;top:887px" width="15" height="8"><path d="M0 8l3.5-5 3.5 5z" fill="#b0b0b0"/><path d="M4 8l5.5-7 5.5 7z" fill="#c8c8c8"/></svg>
<div class="a" style="left:40px;top:898px;width:287px;height:2px;background:#fff"></div>
<div class="a" style="left:327px;top:898px;width:43px;height:2px;background:#777"></div>
<div class="a" style="left:1599px;top:599px;width:1px;height:286px;background:#1a1a1a"></div>
<div class="a" style="left:455px;top:634px;width:1129px;height:17px;overflow:hidden"><div class="a" style="left:112.5px;top:12px;width:1px;height:5px;background:#8a8a8a"></div>
<div class="t" style="left:100.8px;top:3px;font-size:9px;color:#b8b8b8">01:00f</div>
<div class="a" style="left:168.5px;top:12px;width:1px;height:5px;background:#8a8a8a"></div>
<div class="t" style="left:156.9px;top:3px;font-size:9px;color:#b8b8b8">01:15f</div>
<div class="a" style="left:224.5px;top:12px;width:1px;height:5px;background:#8a8a8a"></div>
<div class="t" style="left:213.0px;top:3px;font-size:9px;color:#b8b8b8">02:00f</div>
<div class="a" style="left:281.5px;top:12px;width:1px;height:5px;background:#8a8a8a"></div>
<div class="t" style="left:269.1px;top:3px;font-size:9px;color:#b8b8b8">02:15f</div>
<div class="a" style="left:337.5px;top:12px;width:1px;height:5px;background:#8a8a8a"></div>
<div class="t" style="left:325.2px;top:3px;font-size:9px;color:#b8b8b8">03:00f</div>
<div class="a" style="left:393.5px;top:12px;width:1px;height:5px;background:#8a8a8a"></div>
<div class="t" style="left:381.4px;top:3px;font-size:9px;color:#b8b8b8">03:15f</div>
<div class="a" style="left:449.5px;top:12px;width:1px;height:5px;background:#8a8a8a"></div>
<div class="t" style="left:437.5px;top:3px;font-size:9px;color:#b8b8b8">04:00f</div>
<div class="a" style="left:505.5px;top:12px;width:1px;height:5px;background:#8a8a8a"></div>
<div class="t" style="left:493.6px;top:3px;font-size:9px;color:#b8b8b8">04:15f</div>
<div class="a" style="left:561.5px;top:12px;width:1px;height:5px;background:#8a8a8a"></div>
<div class="t" style="left:549.8px;top:3px;font-size:9px;color:#b8b8b8">05:00f</div>
<div class="a" style="left:617.5px;top:12px;width:1px;height:5px;background:#8a8a8a"></div>
<div class="t" style="left:605.9px;top:3px;font-size:9px;color:#b8b8b8">05:15f</div>
<div class="a" style="left:674.5px;top:12px;width:1px;height:5px;background:#8a8a8a"></div>
<div class="t" style="left:662.0px;top:3px;font-size:9px;color:#b8b8b8">06:00f</div>
<div class="a" style="left:730.5px;top:12px;width:1px;height:5px;background:#8a8a8a"></div>
<div class="t" style="left:718.1px;top:3px;font-size:9px;color:#b8b8b8">06:15f</div>
<div class="a" style="left:786.5px;top:12px;width:1px;height:5px;background:#8a8a8a"></div>
<div class="t" style="left:774.2px;top:3px;font-size:9px;color:#b8b8b8">07:00f</div>
<div class="a" style="left:842.5px;top:12px;width:1px;height:5px;background:#8a8a8a"></div>
<div class="t" style="left:830.4px;top:3px;font-size:9px;color:#b8b8b8">07:15f</div>
<div class="a" style="left:898.5px;top:12px;width:1px;height:5px;background:#8a8a8a"></div>
<div class="t" style="left:886.5px;top:3px;font-size:9px;color:#b8b8b8">08:00f</div>
<div class="a" style="left:954.5px;top:12px;width:1px;height:5px;background:#8a8a8a"></div>
<div class="t" style="left:942.6px;top:3px;font-size:9px;color:#b8b8b8">08:15f</div>
<div class="a" style="left:1010.5px;top:12px;width:1px;height:5px;background:#8a8a8a"></div>
<div class="t" style="left:998.8px;top:3px;font-size:9px;color:#b8b8b8">09:00f</div>
<div class="a" style="left:1066.5px;top:12px;width:1px;height:5px;background:#8a8a8a"></div>
<div class="t" style="left:1054.9px;top:3px;font-size:9px;color:#b8b8b8">09:15f</div>
<div class="a" style="left:1122.5px;top:12px;width:1px;height:5px;background:#8a8a8a"></div>
<div class="t" style="left:1111.0px;top:3px;font-size:9px;color:#b8b8b8">10:00f</div></div>
<!-- ===== EDIT MENU ===== -->
<div class="a" style="left:29px;top:38px;width:278px;height:522px;background:rgba(0,0,0,.18);filter:blur(2px)"></div>
<div class="a" style="left:27px;top:35.5px;width:277px;height:522px;background:#f2f2f2;border:1px solid #cfcfcf;overflow:hidden">
<div class="a" style="left:25px;top:0;width:1px;height:522px;background:#e9e9e9"></div>
<div class="mi" style="top:5.60px">Undo Move Shape Group</div>
<div class="mk" style="top:5.60px">Ctrl+Z</div>
<div class="mi dis" style="top:23.93px">Can&#39;t Redo</div>
<div class="mk dis" style="top:23.93px">Ctrl+Shift+Z</div>
<div class="mi" style="top:42.26px">History</div>
<div class="arr" style="top:44.66px"></div>
<div class="ms" style="top:58.75px"></div>
<div class="mi" style="top:66.43px">Cut</div>
<div class="mk" style="top:66.43px">Ctrl+X</div>
<div class="mi" style="top:84.76px">Copy</div>
<div class="mk" style="top:84.76px">Ctrl+C</div>
<div class="mi" style="top:103.09px">Copy with Property Links</div>
<div class="mk" style="top:103.09px">Ctrl+Alt+C</div>
<div class="mi" style="top:121.43px">Copy with Relative Property Links</div>
<div class="mi dis" style="top:139.76px">Copy Expression Only</div>
<div class="mi dis" style="top:158.09px">Paste</div>
<div class="mk dis" style="top:158.09px">Ctrl+V</div>
<div class="mi" style="top:176.43px">Clear</div>
<div class="mk" style="top:176.43px">Delete</div>
<div class="ms" style="top:192.91px"></div>
<div class="mi" style="top:200.59px">Duplicate</div>
<div class="mk" style="top:200.59px">Ctrl+D</div>
<div class="mi" style="top:218.93px">Split Layer</div>
<div class="mk" style="top:218.93px">Ctrl+Shift+D</div>
<div class="mi" style="top:237.26px">Lift Work Area</div>
<div class="mi" style="top:255.59px">Extract Work Area</div>
<div class="mi" style="top:273.92px">Select All</div>
<div class="mk" style="top:273.92px">Ctrl+A</div>
<div class="mi" style="top:292.26px">Deselect All</div>
<div class="mk" style="top:292.26px">Ctrl+Shift+A</div>
<div class="ms" style="top:308.74px"></div>
<div class="mi" style="top:316.42px">Label</div>
<div class="arr" style="top:318.82px"></div>
<div class="ms" style="top:332.91px"></div>
<div class="mi" style="top:340.59px">Purge</div>
<div class="arr" style="top:342.99px"></div>
<div class="ms" style="top:357.07px"></div>
<div class="mi dis" style="top:364.76px">Edit Original...</div>
<div class="mk dis" style="top:364.76px">Ctrl+E</div>
<div class="mi dis" style="top:383.09px">Edit in Adobe Audition</div>
<div class="ms" style="top:399.57px"></div>
<div class="mi" style="top:407.25px">Team Project</div>
<div class="arr" style="top:409.65px"></div>
<div class="ms" style="top:423.74px"></div>
<div class="mi" style="top:431.42px">Templates</div>
<div class="arr" style="top:433.82px"></div>
<div class="a" style="left:1px;top:445.49px;width:273px;height:18.33px;background:#91c9f7"></div>
<div class="mi" style="top:449.75px">Preferences</div>
<div class="arr" style="top:452.15px"></div>
<div class="mi" style="top:468.09px">arafatsani364@gmail.com</div>
<div class="arr" style="top:470.49px"></div>
<div class="mi" style="top:486.42px">Keyboard Shortcuts</div>
<div class="mk" style="top:486.42px">Ctrl+Alt+&#39;</div>
<div class="mi dis" style="top:504.75px">Paste Mocha mask</div>
</div>
<div class="a" style="left:302px;top:482px;width:230px;height:335px;background:rgba(0,0,0,.2);filter:blur(2px)"></div>
<div class="a" style="left:299px;top:479px;width:230px;height:335px;background:#f2f2f2;border:1px solid #cfcfcf;overflow:hidden">
<div class="a" style="left:25px;top:0;width:1px;height:335px;background:#e9e9e9"></div>
<div class="a" style="left:1px;top:2.20px;width:226px;height:18.33px;background:#91c9f7"></div>
<div class="mi" style="top:6.47px">General...</div>
<div class="mk" style="top:6.47px">Ctrl+Alt+;</div>
<div class="mi" style="top:24.80px">Previews...</div>
<div class="mi" style="top:43.13px">Display...</div>
<div class="mi" style="top:61.47px">Import...</div>
<div class="mi" style="top:79.80px">Output...</div>
<div class="mi" style="top:98.13px">Grids &amp; Guides...</div>
<div class="mi" style="top:116.46px">Labels...</div>
<div class="mi" style="top:134.80px">Media &amp; Disk Cache...</div>
<div class="mi" style="top:153.13px">Video Preview...</div>
<div class="mi" style="top:171.46px">Appearance...</div>
<div class="mi" style="top:189.80px">New Project...</div>
<div class="mi" style="top:208.13px">Auto-Save...</div>
<div class="mi" style="top:226.46px">Memory...</div>
<div class="mi" style="top:244.80px">Audio Hardware...</div>
<div class="mi" style="top:263.13px">Audio Output Mapping...</div>
<div class="mi" style="top:281.46px">Sync Settings...</div>
<div class="mi" style="top:299.79px">Type...</div>
<div class="mi" style="top:318.13px">Scripting &amp; Expressions...</div>
</div>
</body></html>
